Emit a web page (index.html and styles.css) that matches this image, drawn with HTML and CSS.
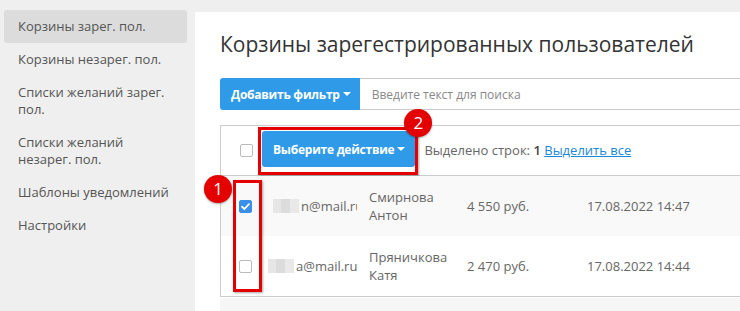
FILE: index.html
```html
<!DOCTYPE html>
<html lang="ru">
<head>
<meta charset="UTF-8">
<meta name="viewport" content="width=device-width, initial-scale=1.0">
<title>Корзины зарегестрированных пользователей</title>
<link rel="stylesheet" href="styles.css">
</head>
<body>

<div class="page">
  <aside class="sidebar">
    <a class="nav-item active" href="#">Корзины зарег. пол.</a>
    <a class="nav-item" href="#">Корзины незарег. пол.</a>
    <a class="nav-item" href="#">Списки желаний зарег. пол.</a>
    <a class="nav-item" href="#">Списки желаний незарег. пол.</a>
    <a class="nav-item" href="#">Шаблоны уведомлений</a>
    <a class="nav-item" href="#">Настройки</a>
  </aside>

  <main class="main">
    <h1 class="title">Корзины зарегестрированных пользователей</h1>

    <div class="filter-bar">
      <button class="btn btn-filter">Добавить фильтр <span class="caret"></span></button>
      <input class="search" type="text" placeholder="Введите текст для поиска">
    </div>

    <div class="grid-box">
      <div class="toolbar">
        <span class="check"></span>
        <span class="action-wrap">
          <button class="btn btn-action">Выберите действие <span class="caret"></span></button>
          <span class="mark mark-action"></span>
          <span class="badge badge-action">2</span>
        </span>
        <span class="selected">Выделено строк: <b>1</b> <a href="#">Выделить все</a></span>
      </div>

      <div class="rows">
        <div class="row odd">
          <div class="cell cell-check">
            <span class="check checked">
              <svg width="9" height="7" viewBox="0 0 9 7"><path d="M1 3.6 L3.4 6 L8 1.2" fill="none" stroke="#fff" stroke-width="1.8" stroke-linecap="round" stroke-linejoin="round"/></svg>
            </span>
          </div>
          <div class="cell cell-email"><span class="blur blur-one"></span>n@mail.ru</div>
          <div class="cell cell-name">Смирнова<br>Антон</div>
          <div class="cell cell-price">4 550 руб.</div>
          <div class="cell cell-date">17.08.2022 14:47</div>
        </div>
        <div class="row">
          <div class="cell cell-check"><span class="check"></span></div>
          <div class="cell cell-email"><span class="blur blur-two"></span>a@mail.ru</div>
          <div class="cell cell-name">Пряничкова<br>Катя</div>
          <div class="cell cell-price">2 470 руб.</div>
          <div class="cell cell-date">17.08.2022 14:44</div>
        </div>

        <span class="mark mark-column"></span>
        <span class="badge badge-column">1</span>
      </div>
    </div>

    <div class="grid-footer"></div>
  </main>
</div>

</body>
</html>
```

FILE: styles.css
```css
body {
  margin: 0;
  background: #efefef;
  font-family: "Open Sans", "Liberation Sans", sans-serif;
  font-size: 13px;
  color: #555;
  overflow: hidden;
}
.page {
  display: flex;
  width: 800px;
  min-height: 311px;
}

/* sidebar */
.sidebar {
  width: 195px;
  flex-shrink: 0;
  padding-top: 10px;
  box-sizing: border-box;
}
.nav-item {
  display: block;
  margin-left: 4px;
  width: 183px;
  box-sizing: border-box;
  padding: 8px 14px 8px 14px;
  line-height: 17px;
  color: #555;
  text-decoration: none;
  border-radius: 3px;
}
.nav-item.active {
  background: #dcdcdc;
}

/* main panel */
.main {
  flex: 1;
  background: #fff;
  margin-top: 12px;
  padding: 18px 0 0 25px;
}
.title {
  margin: 0 0 20px;
  font-size: 21px;
  font-weight: 400;
  line-height: 28px;
  color: #333;
}

.btn {
  background: #2f9be8;
  color: #fff;
  border: none;
  font-family: inherit;
  font-size: 12px;
  font-weight: 700;
  letter-spacing: -0.25px;
  cursor: pointer;
  border-radius: 3px;
  display: inline-flex;
  align-items: center;
  gap: 3px;
}
.caret {
  width: 0;
  height: 0;
  border-left: 4px solid transparent;
  border-right: 4px solid transparent;
  border-top: 4px solid #fff;
}

.filter-bar {
  display: flex;
  height: 32px;
}
.btn-filter {
  padding: 0 9px 0 11px;
  border-radius: 3px 0 0 3px;
}
.search {
  flex: 1;
  border: 1px solid #ccc;
  border-left: none;
  padding: 0 12px;
  font-family: inherit;
  font-size: 12px;
  color: #555;
  outline: none;
}
.search::placeholder {
  color: #888;
}

/* grid */
.grid-box {
  margin-top: 15px;
  border: 1px solid #ccc;
}
.toolbar {
  display: flex;
  align-items: flex-start;
  height: 50px;
  box-sizing: border-box;
  padding: 5px 0 0 19px;
  border-bottom: 1px solid #ccc;
}
.toolbar > .check {
  margin-top: 13px;
  margin-right: 9px;
}
.check {
  display: inline-flex;
  align-items: center;
  justify-content: center;
  width: 13px;
  height: 13px;
  box-sizing: border-box;
  border: 1px solid #bbb;
  border-radius: 2px;
  background: #fff;
}
.check.checked {
  background: #3a8fe8;
  border-color: #3a8fe8;
}
.action-wrap {
  position: relative;
  display: inline-block;
}
.btn-action {
  height: 36px;
  padding: 0 10px 0 11px;
  border-radius: 3px;
}
.selected {
  margin: 10px 0 0 9px;
  color: #666;
}
.selected b {
  color: #444;
  font-weight: 600;
}
.selected a {
  color: #1c87d6;
}

.rows {
  position: relative;
}
.row {
  display: grid;
  grid-template-columns: 47px 101px 98px 120px 1fr;
  height: 60px;
  align-items: center;
  color: #666;
  line-height: 18px;
}
.row.odd {
  background: #f9f9f9;
}
.cell-check {
  padding-left: 18px;
  display: flex;
}
.cell-email {
  margin-right: 12px;
  white-space: nowrap;
  overflow: hidden;
  display: flex;
  align-items: center;
}
.blur {
  display: inline-block;
  flex-shrink: 0;
  height: 14px;
  margin-right: 2px;
  background: linear-gradient(90deg, #e6e6e6 0 30%, #dcdcdc 30% 65%, #e9e9e9 65%);
}
.blur-one {
  width: 26px;
  margin-left: 5px;
}
.blur-two {
  width: 26px;
}
.grid-footer {
  margin-top: 1px;
  height: 20px;
  background: #f6f6f6;
}

/* annotations */
.mark {
  position: absolute;
  border: 3px solid #e40000;
  box-shadow: 1px 1px 2px rgba(0, 0, 0, 0.35);
  pointer-events: none;
}
.mark-action {
  top: -4px;
  left: -4px;
  right: -3px;
  bottom: -8px;
}
.mark-column {
  top: 4px;
  left: 12px;
  width: 29px;
  height: 112px;
  box-sizing: border-box;
}
.badge {
  position: absolute;
  width: 28px;
  height: 28px;
  border-radius: 50%;
  background: #e40000;
  color: #fff;
  font-size: 17px;
  line-height: 28px;
  text-align: center;
  box-shadow: 0 1px 2px rgba(0, 0, 0, 0.35);
}
.badge-action {
  top: -22px;
  right: -17px;
}
.badge-column {
  top: -1px;
  left: -17px;
}
```
